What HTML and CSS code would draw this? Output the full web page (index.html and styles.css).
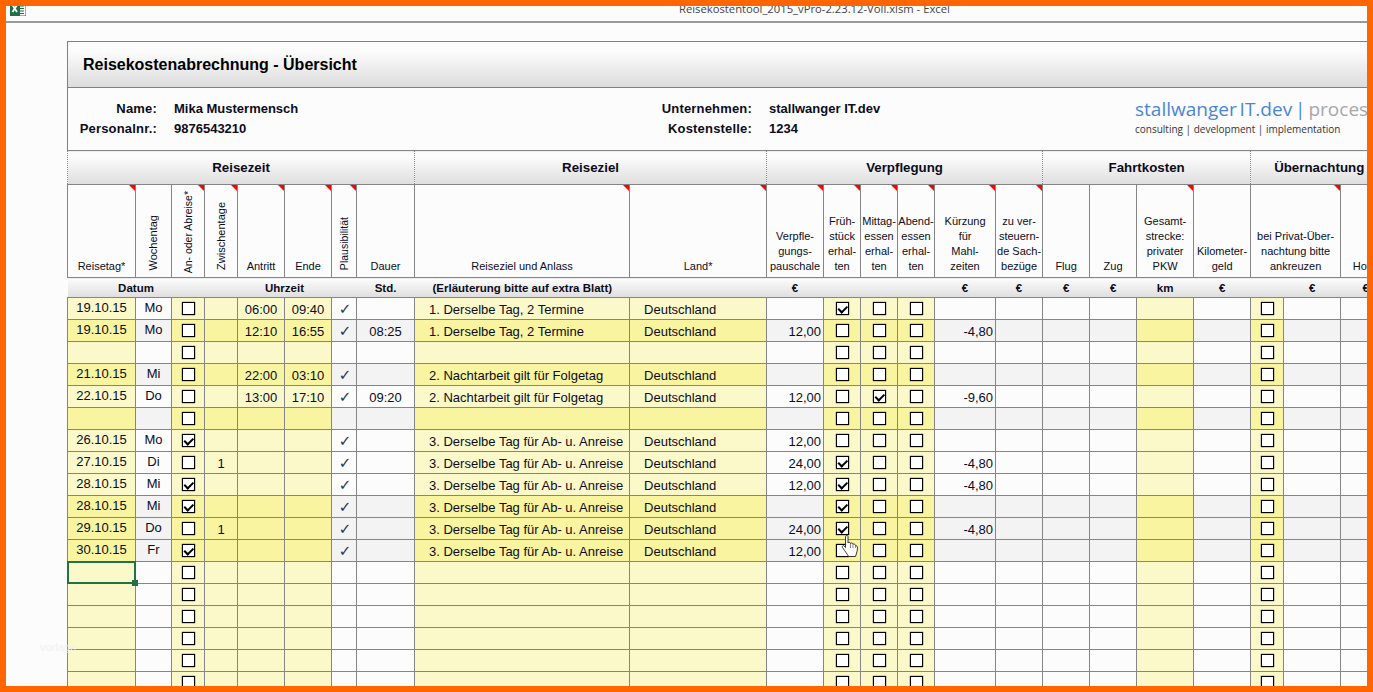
FILE: index.html
```html
<!DOCTYPE html>
<html lang="de">
<head>
<meta charset="utf-8">
<title>Reisekostenabrechnung</title>
<link rel="stylesheet" href="styles.css">
</head>
<body>
<div class="frame">
  <header class="winbar">
    <svg class="xl" width="16" height="16" viewBox="0 0 16 16"><rect x="8" y="2" width="8" height="14" fill="#fff" stroke="#1e7145" stroke-width="1"/><path d="M10 6h4M10 8.500h4M10 11h4M10 13.500h4" stroke="#1e7145" stroke-width="1.200"/><rect x="0" y="0" width="10" height="16" fill="#1e7145"/><path d="M2.500 5l4.500 7M7 5l-4.500 7" stroke="#fff" stroke-width="1.800"/></svg>
    <span class="wintitle">Reisekostentool_2015_vPro-2.23.12-Voll.xlsm - Excel</span>
  </header>
  <main class="sheet">
    <h1 class="title">Reisekostenabrechnung - Übersicht</h1>
    <section class="info">
      <dl class="pair first"><dt>Name:</dt><dd>Mika Mustermensch</dd><dt>Personalnr.:</dt><dd>9876543210</dd></dl>
      <dl class="pair second"><dt>Unternehmen:</dt><dd>stallwanger IT.dev</dd><dt>Kostenstelle:</dt><dd>1234</dd></dl>
      <div class="logo">
        <div class="logoname"><span class="blue">stallwanger IT.dev</span> <span class="bar">|</span> <span class="grey">process</span></div>
        <div class="logosub">consulting | development | implementation</div>
      </div>
    </section>
    <table class="grid">
      <colgroup>
        <col class="w68"><col class="w36"><col class="w33"><col class="w33"><col class="w47"><col class="w47"><col class="w25"><col class="w58"><col class="w215"><col class="w137"><col class="w57"><col class="w37"><col class="w37"><col class="w37"><col class="w61"><col class="w47"><col class="w47"><col class="w47"><col class="w57"><col class="w57"><col class="w33"><col class="w57"><col class="w50">
      </colgroup>
      <thead>
        <tr class="groups">
          <th colspan="8">Reisezeit</th><th colspan="2">Reiseziel</th><th colspan="6">Verpflegung</th><th colspan="4">Fahrtkosten</th><th colspan="3" class="ub"><span class="ubt">Übernachtung</span></th>
        </tr>
        <tr class="heads">
          <td class="n">Reisetag*</td>
          <td><span class="rot">Wochentag</span></td>
          <td class="n"><span class="rot s low">An- oder Abreise*</span></td>
          <td class="n"><span class="rot">Zwischentage</span></td>
          <td class="n">Antritt</td>
          <td class="n">Ende</td>
          <td class="n"><span class="rot s">Plausibilität</span></td>
          <td>Dauer</td>
          <td class="n">Reiseziel und Anlass</td>
          <td class="n">Land*</td>
          <td class="n">Verpfle-<br>gungs-<br>pauschale</td>
          <td class="n">Früh-<br>stück<br>erhal-<br>ten</td>
          <td class="n">Mittag-<br>essen<br>erhal-<br>ten</td>
          <td class="n">Abend-<br>essen<br>erhal-<br>ten</td>
          <td class="n">Kürzung<br>für<br>Mahl-<br>zeiten</td>
          <td class="n">zu ver-<br>steuern-<br>de Sach-<br>bezüge</td>
          <td>Flug</td>
          <td>Zug</td>
          <td class="n">Gesamt-<br>strecke:<br>privater<br>PKW</td>
          <td>Kilometer-<br>geld</td>
          <td colspan="2" class="n">bei Privat-Über-<br>nachtung bitte<br>ankreuzen</td>
          <td>Hotel</td>
        </tr>
        <tr class="units">
          <td colspan="3">Datum</td><td></td><td colspan="2">Uhrzeit</td><td></td><td>Std.</td><td colspan="2" class="left">(Erläuterung bitte auf extra Blatt)</td><td>€</td><td colspan="3"></td><td>€</td><td>€</td><td>€</td><td>€</td><td>km</td><td>€</td><td></td><td>€</td><td>€</td>
        </tr>
      </thead>
      <tbody>
        <tr><td class="y t">19.10.15</td><td class="t">Mo</td><td class="y"><i class="c"></i></td><td class="y"></td><td class="y m">06:00</td><td class="y m">09:40</td><td class="k">✓</td><td></td><td class="y l">1. Derselbe Tag, 2 Termine</td><td class="y l">Deutschland</td><td></td><td class="y"><i class="c on"></i></td><td class="y"><i class="c"></i></td><td class="y"><i class="c"></i></td><td></td><td></td><td></td><td></td><td class="y"></td><td></td><td class="y"><i class="c"></i></td><td></td><td></td></tr>
        <tr class="d"><td class="y t">19.10.15</td><td class="t">Mo</td><td class="y"><i class="c"></i></td><td class="y"></td><td class="y m">12:10</td><td class="y m">16:55</td><td class="k">✓</td><td class="m">08:25</td><td class="y l">1. Derselbe Tag, 2 Termine</td><td class="y l">Deutschland</td><td class="r">12,00</td><td class="y"><i class="c"></i></td><td class="y"><i class="c"></i></td><td class="y"><i class="c"></i></td><td class="r">-4,80</td><td></td><td></td><td></td><td class="y"></td><td></td><td class="y"><i class="c"></i></td><td></td><td></td></tr>
        <tr><td class="y"></td><td></td><td class="y"><i class="c"></i></td><td class="y"></td><td class="y"></td><td class="y"></td><td></td><td></td><td class="y"></td><td class="y"></td><td></td><td class="y"><i class="c"></i></td><td class="y"><i class="c"></i></td><td class="y"><i class="c"></i></td><td></td><td></td><td></td><td></td><td class="y"></td><td></td><td class="y"><i class="c"></i></td><td></td><td></td></tr>
        <tr class="d"><td class="y t">21.10.15</td><td class="t">Mi</td><td class="y"><i class="c"></i></td><td class="y"></td><td class="y m">22:00</td><td class="y m">03:10</td><td class="k">✓</td><td></td><td class="y l">2. Nachtarbeit gilt für Folgetag</td><td class="y l">Deutschland</td><td></td><td class="y"><i class="c"></i></td><td class="y"><i class="c"></i></td><td class="y"><i class="c"></i></td><td></td><td></td><td></td><td></td><td class="y"></td><td></td><td class="y"><i class="c"></i></td><td></td><td></td></tr>
        <tr><td class="y t">22.10.15</td><td class="t">Do</td><td class="y"><i class="c"></i></td><td class="y"></td><td class="y m">13:00</td><td class="y m">17:10</td><td class="k">✓</td><td class="m">09:20</td><td class="y l">2. Nachtarbeit gilt für Folgetag</td><td class="y l">Deutschland</td><td class="r">12,00</td><td class="y"><i class="c"></i></td><td class="y"><i class="c on"></i></td><td class="y"><i class="c"></i></td><td class="r">-9,60</td><td></td><td></td><td></td><td class="y"></td><td></td><td class="y"><i class="c"></i></td><td></td><td></td></tr>
        <tr class="d"><td class="y"></td><td></td><td class="y"><i class="c"></i></td><td class="y"></td><td class="y"></td><td class="y"></td><td></td><td></td><td class="y"></td><td class="y"></td><td></td><td class="y"><i class="c"></i></td><td class="y"><i class="c"></i></td><td class="y"><i class="c"></i></td><td></td><td></td><td></td><td></td><td class="y"></td><td></td><td class="y"><i class="c"></i></td><td></td><td></td></tr>
        <tr><td class="y t">26.10.15</td><td class="t">Mo</td><td class="y"><i class="c on"></i></td><td class="y"></td><td class="y"></td><td class="y"></td><td class="k">✓</td><td></td><td class="y l">3. Derselbe Tag für Ab- u. Anreise</td><td class="y l">Deutschland</td><td class="r">12,00</td><td class="y"><i class="c"></i></td><td class="y"><i class="c"></i></td><td class="y"><i class="c"></i></td><td></td><td></td><td></td><td></td><td class="y"></td><td></td><td class="y"><i class="c"></i></td><td></td><td></td></tr>
        <tr><td class="y t">27.10.15</td><td class="t">Di</td><td class="y"><i class="c"></i></td><td class="y m">1</td><td class="y"></td><td class="y"></td><td class="k">✓</td><td></td><td class="y l">3. Derselbe Tag für Ab- u. Anreise</td><td class="y l">Deutschland</td><td class="r">24,00</td><td class="y"><i class="c on"></i></td><td class="y"><i class="c"></i></td><td class="y"><i class="c"></i></td><td class="r">-4,80</td><td></td><td></td><td></td><td class="y"></td><td></td><td class="y"><i class="c"></i></td><td></td><td></td></tr>
        <tr><td class="y t">28.10.15</td><td class="t">Mi</td><td class="y"><i class="c on"></i></td><td class="y"></td><td class="y"></td><td class="y"></td><td class="k">✓</td><td></td><td class="y l">3. Derselbe Tag für Ab- u. Anreise</td><td class="y l">Deutschland</td><td class="r">12,00</td><td class="y"><i class="c on"></i></td><td class="y"><i class="c"></i></td><td class="y"><i class="c"></i></td><td class="r">-4,80</td><td></td><td></td><td></td><td class="y"></td><td></td><td class="y"><i class="c"></i></td><td></td><td></td></tr>
        <tr class="d"><td class="y t">28.10.15</td><td class="t">Mi</td><td class="y"><i class="c on"></i></td><td class="y"></td><td class="y"></td><td class="y"></td><td class="k">✓</td><td></td><td class="y l">3. Derselbe Tag für Ab- u. Anreise</td><td class="y l">Deutschland</td><td></td><td class="y"><i class="c on"></i></td><td class="y"><i class="c"></i></td><td class="y"><i class="c"></i></td><td></td><td></td><td></td><td></td><td class="y"></td><td></td><td class="y"><i class="c"></i></td><td></td><td></td></tr>
        <tr class="d"><td class="y t">29.10.15</td><td class="t">Do</td><td class="y"><i class="c"></i></td><td class="y m">1</td><td class="y"></td><td class="y"></td><td class="k">✓</td><td></td><td class="y l">3. Derselbe Tag für Ab- u. Anreise</td><td class="y l">Deutschland</td><td class="r">24,00</td><td class="y"><i class="c on"></i></td><td class="y"><i class="c"></i></td><td class="y"><i class="c"></i></td><td class="r">-4,80</td><td></td><td></td><td></td><td class="y"></td><td></td><td class="y"><i class="c"></i></td><td></td><td></td></tr>
        <tr class="d"><td class="y t">30.10.15</td><td class="t">Fr</td><td class="y"><i class="c on"></i></td><td class="y"></td><td class="y"></td><td class="y"></td><td class="k">✓</td><td></td><td class="y l">3. Derselbe Tag für Ab- u. Anreise</td><td class="y l">Deutschland</td><td class="r">12,00</td><td class="y"><i class="c"></i></td><td class="y"><i class="c"></i></td><td class="y"><i class="c"></i></td><td></td><td></td><td></td><td></td><td class="y"></td><td></td><td class="y"><i class="c"></i></td><td></td><td></td></tr>
        <tr><td class="y sel"><span class="cursor"><span class="handle"></span></span></td><td></td><td class="y"><i class="c"></i></td><td class="y"></td><td class="y"></td><td class="y"></td><td></td><td></td><td class="y"></td><td class="y"></td><td></td><td class="y"><i class="c"></i></td><td class="y"><i class="c"></i></td><td class="y"><i class="c"></i></td><td></td><td></td><td></td><td></td><td class="y"></td><td></td><td class="y"><i class="c"></i></td><td></td><td></td></tr>
        <tr><td class="y"></td><td></td><td class="y"><i class="c"></i></td><td class="y"></td><td class="y"></td><td class="y"></td><td></td><td></td><td class="y"></td><td class="y"></td><td></td><td class="y"><i class="c"></i></td><td class="y"><i class="c"></i></td><td class="y"><i class="c"></i></td><td></td><td></td><td></td><td></td><td class="y"></td><td></td><td class="y"><i class="c"></i></td><td></td><td></td></tr>
        <tr><td class="y"></td><td></td><td class="y"><i class="c"></i></td><td class="y"></td><td class="y"></td><td class="y"></td><td></td><td></td><td class="y"></td><td class="y"></td><td></td><td class="y"><i class="c"></i></td><td class="y"><i class="c"></i></td><td class="y"><i class="c"></i></td><td></td><td></td><td></td><td></td><td class="y"></td><td></td><td class="y"><i class="c"></i></td><td></td><td></td></tr>
        <tr><td class="y"></td><td></td><td class="y"><i class="c"></i></td><td class="y"></td><td class="y"></td><td class="y"></td><td></td><td></td><td class="y"></td><td class="y"></td><td></td><td class="y"><i class="c"></i></td><td class="y"><i class="c"></i></td><td class="y"><i class="c"></i></td><td></td><td></td><td></td><td></td><td class="y"></td><td></td><td class="y"><i class="c"></i></td><td></td><td></td></tr>
        <tr><td class="y"></td><td></td><td class="y"><i class="c"></i></td><td class="y"></td><td class="y"></td><td class="y"></td><td></td><td></td><td class="y"></td><td class="y"></td><td></td><td class="y"><i class="c"></i></td><td class="y"><i class="c"></i></td><td class="y"><i class="c"></i></td><td></td><td></td><td></td><td></td><td class="y"></td><td></td><td class="y"><i class="c"></i></td><td></td><td></td></tr>
        <tr><td class="y"></td><td></td><td class="y"><i class="c"></i></td><td class="y"></td><td class="y"></td><td class="y"></td><td></td><td></td><td class="y"></td><td class="y"></td><td></td><td class="y"><i class="c"></i></td><td class="y"><i class="c"></i></td><td class="y"><i class="c"></i></td><td></td><td></td><td></td><td></td><td class="y"></td><td></td><td class="y"><i class="c"></i></td><td></td><td></td></tr>
      </tbody>
    </table>
  </main>
  <svg class="hand" width="18" height="23" viewBox="0 0 18 23"><path d="M4.500 1.500C4.500.2 7 .2 7 1.500V8C7.500 7 9.300 7 9.500 8.500 10 7.600 11.800 7.800 12 9.300 12.600 8.700 14.400 9 14.600 10.600 15.200 10.400 16.500 11 16.500 12.800 16.500 15.500 15.600 18 14.500 21.500H7.500C6 18.500 4.500 17 1.500 12.500.7 11.200 2.300 10 3.300 11L4.500 12.500Z" fill="#fff" stroke="#222" stroke-width=".9"/><path d="M9.500 8.500V13M12 9.300V13M14.600 10.600V13" stroke="#555" stroke-width=".7" fill="none"/></svg>
  <span class="watermark">vorlage</span>
</div>
</body>
</html>
```

FILE: styles.css
```css
* { box-sizing: border-box; }
html, body { margin: 0; padding: 0; }
body { width: 1373px; height: 692px; overflow: hidden; font-family: "Liberation Sans", Arial, sans-serif; color: #0c0c1c; }

.frame { position: relative; width: 1373px; height: 692px; border: 6px solid #ff6600; background: #fcfcfc; overflow: hidden; }

.winbar { display: flex; height: 17px; border-bottom: 2px solid #9a9a9a; overflow: hidden; padding-left: 4px; }
.xl { margin-top: -6px; flex: none; }
.wintitle { margin-left: 653px; margin-top: -3px; font: 11.250px/12px "Open Sans", sans-serif; color: #444; white-space: nowrap; }

.sheet { width: 1334px; margin: 18px 0 0 61px; }

.title { margin: 0; height: 47px; border: 1px solid #808080; border-right: 0; padding-left: 15px; font-size: 16px; line-height: 46px; font-weight: bold; color: #000; background: linear-gradient(#fcfcfc 20%, #dcdcdc); }

.info { display: flex; height: 62px; border-left: 1px solid #808080; padding-top: 11px; }
.pair { display: grid; margin: 0; grid-auto-rows: 20px; column-gap: 17px; font-size: 13px; font-weight: bold; line-height: 20px; align-content: start; }
.pair dt { text-align: right; letter-spacing: .18px; }
.pair dd { margin: 0; }
.pair.first { width: 554px; grid-template-columns: 89px auto; }
.pair.second { width: 513px; grid-template-columns: 130px auto; }

.logo { white-space: nowrap; font-family: "Open Sans", sans-serif; margin-top: -1px; }
.logoname { font-size: 19px; line-height: 22px; font-weight: 500; word-spacing: -2px; }
.logoname .blue, .logoname .bar { color: #4a86d4; }
.logoname .grey { color: #a8a8a8; }
.logosub { font-size: 10px; line-height: 14px; color: #333; margin-top: 2px; }

.grid { width: 1323px; table-layout: fixed; border-collapse: collapse; }
.grid td, .grid th { padding: 0; border: 1px solid #858585; text-align: center; overflow: hidden; white-space: nowrap; }

.w68 { width: 68px; } .w36 { width: 36px; } .w33 { width: 33px; } .w47 { width: 47px; } .w25 { width: 25px; } .w58 { width: 58px; } .w215 { width: 215px; } .w137 { width: 137px; } .w57 { width: 57px; } .w37 { width: 37px; } .w61 { width: 61px; } .w50 { width: 50px; }

.groups th { height: 34px; font-size: 13.300px; font-weight: bold; background: linear-gradient(#fcfcfc 15%, #dedede); border-left-style: dotted; border-right-style: dotted; }
.ub { text-align: left !important; }
.ubt { margin-left: 23px; }

.heads td { height: 93px; position: relative; vertical-align: bottom; font-size: 11px; line-height: 15px; padding-bottom: 3px; background: #fcfcfc; overflow: visible; }
.heads td.n::after { content: ""; position: absolute; top: 0; right: 0; border-top: 6px solid #ff0000; border-left: 6px solid transparent; }
.rot { display: inline-block; writing-mode: vertical-rl; transform: rotate(180deg); line-height: 15px; }
.rot.s { font-size: 10.500px; }
.rot.low { margin-bottom: -3px; }

.units td { height: 20px; font-size: 11.500px; font-weight: bold; background: linear-gradient(#fcfcfc, #dedede); border-left: 0; border-right: 0; }
.units td.left { text-align: left; padding-left: 18px; }

tbody tr { height: 22px; }
tbody td { height: 22px; font-size: 13px; line-height: 19px; background: #fcfcfc; vertical-align: middle; }
tbody tr.d td { background: #f3f3f3; }
tbody td.y { background: #fbf9c9; }
tbody tr.d td.y { background: #f8f4a0; }
tbody td.t { line-height: 17px; padding-bottom: 3px; }
tbody td.m { padding-top: 2px; }
.grid tbody td.l { text-align: left; padding-left: 14px; padding-top: 2px; }
.grid tbody td.r { text-align: right; padding-right: 2px; padding-top: 2px; }
.grid tbody td.k { font-family: "DejaVu Sans", sans-serif; font-size: 15px; color: #2a3550; padding-left: 2px; padding-top: 1px; }

.c { display: block; position: relative; width: 13px; height: 13px; margin: 0 auto; border: 1px solid #000; background: #fff; box-shadow: 0 0 1px #000; }
.c.on::after { content: ""; position: absolute; left: 3.500px; top: .5px; width: 4px; height: 6.500px; border: solid #000; border-width: 0 2px 2px 0; transform: rotate(45deg); }

.grid tbody td.sel { position: relative; overflow: visible; }
.cursor { position: absolute; inset: -1px; border: 2px solid #217346; z-index: 2; }
.handle { position: absolute; right: -4px; bottom: -4px; width: 6px; height: 6px; background: #217346; }

.hand { position: absolute; left: 835px; top: 529px; z-index: 3; }
.watermark { position: absolute; left: 34px; top: 635px; font-size: 11px; color: #f0f0f0; z-index: 3; }
```
